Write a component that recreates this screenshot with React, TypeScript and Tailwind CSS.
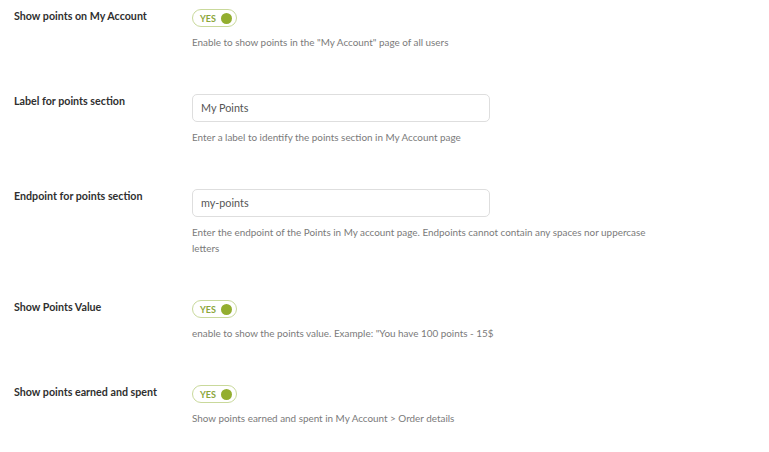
import type { ReactNode } from 'react'

const font = { fontFamily: 'Lato, "Open Sans", sans-serif' }

function Toggle() {
  return (
    <div className="mt-[1px] flex h-[18px] w-[45px] items-center justify-between rounded-full border border-[#c9d99b] bg-white pl-[7px] pr-[4px]">
      <span className="text-[9px] font-bold leading-none text-[#8ba63a]">YES</span>
      <span className="h-[11px] w-[11px] rounded-full bg-[#93ae2f]" />
    </div>
  )
}

function TextInput({ value }: { value: string }) {
  return (
    <div className="mt-[1px] flex h-[28px] w-[298px] items-center rounded-[5px] border border-[#dedede] bg-white px-[8px] text-[10.8px] text-[#555]">
      {value}
    </div>
  )
}

function Row({ label, desc, children }: { label: string; desc: ReactNode; children: ReactNode }) {
  return (
    <div className="flex items-start">
      <div className="w-[178px] shrink-0 text-[10.7px] font-bold leading-[16px] text-[#2f2f2f]">{label}</div>
      <div className="flex flex-col">
        {children}
        <p className="mt-[7px] w-[470px] text-[9.9px] leading-[16px] text-[#7a7a7a]">{desc}</p>
      </div>
    </div>
  )
}

export default function App() {
  return (
    <div className="min-h-screen bg-white pl-[14px] pt-[8px]" style={font}>
      <div className="flex flex-col gap-[43px]">
        <Row label="Show points on My Account" desc={'Enable to show points in the "My Account" page of all users'}>
          <Toggle />
        </Row>
        <Row label="Label for points section" desc="Enter a label to identify the points section in My Account page">
          <TextInput value="My Points" />
        </Row>
        <Row
          label="Endpoint for points section"
          desc="Enter the endpoint of the Points in My account page. Endpoints cannot contain any spaces nor uppercase letters"
        >
          <TextInput value="my-points" />
        </Row>
        <Row label="Show Points Value" desc={'enable to show the points value. Example: "You have 100 points - 15$'}>
          <Toggle />
        </Row>
        <Row label="Show points earned and spent" desc="Show points earned and spent in My Account > Order details">
          <Toggle />
        </Row>
      </div>
    </div>
  )
}
